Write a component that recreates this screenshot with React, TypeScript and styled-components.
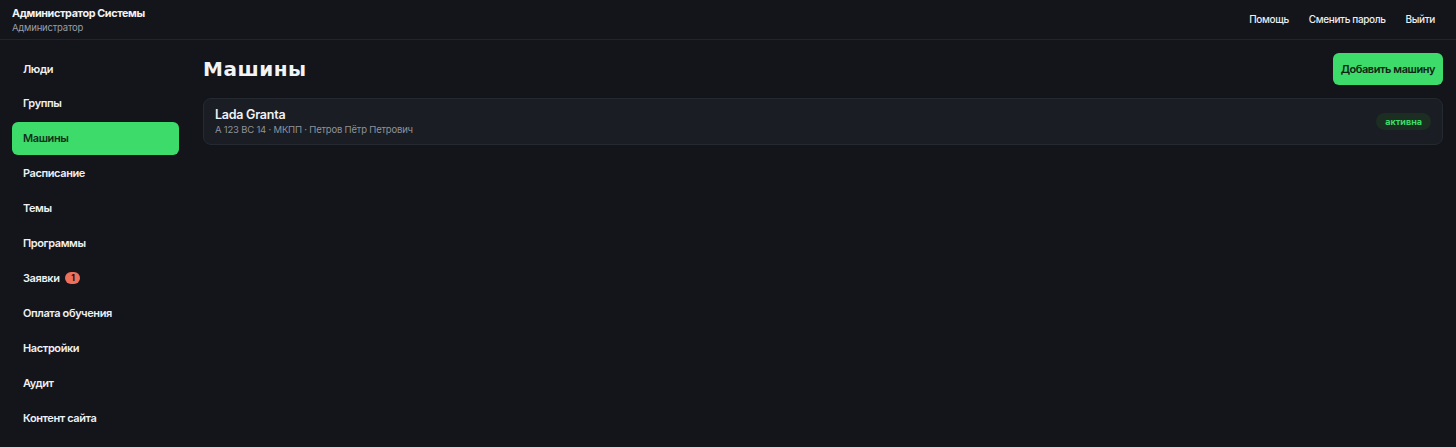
import React from "react";
import styled, { createGlobalStyle } from "styled-components";

const Global = createGlobalStyle`
  html, body { margin: 0; padding: 0; background: #13151b; }
  body { font-family: Inter, "Noto Sans", sans-serif; color: #e8eaee; }
  * { box-sizing: border-box; }
`;

const Page = styled.div`
  min-height: 447px;
  background: #13151b;
  display: flex;
  flex-direction: column;
`;

const Header = styled.header`
  height: 40px;
  border-bottom: 1px solid #22252c;
  display: flex;
  align-items: center;
  justify-content: space-between;
  padding: 0 21px 0 12px;
`;

const User = styled.div`
  display: flex;
  flex-direction: column;
  gap: 1px;
  margin-top: 1px;
`;

const UserName = styled.div`
  font-size: 10.8px;
  font-weight: 700;
  letter-spacing: -0.38px;
  color: #f1f2f4;
  line-height: 14px;
`;

const UserRole = styled.div`
  font-size: 9.5px;
  letter-spacing: -0.2px;
  color: #9a9ea6;
  line-height: 12px;
`;

const TopLinks = styled.nav`
  display: flex;
  gap: 20px;
  margin-top: -2px;
`;

const TopLink = styled.a`
  font-size: 10px;
  font-weight: 500;
  letter-spacing: -0.35px;
  color: #eceef1;
  text-decoration: none;
`;

const Body = styled.div`
  display: flex;
  flex: 1;
`;

const Sidebar = styled.aside`
  width: 191px;
  padding: 12px;
  display: flex;
  flex-direction: column;
  gap: 1.92px;
`;

const NavItem = styled.a<{ $active?: boolean }>`
  height: 33px;
  display: flex;
  align-items: center;
  gap: 6px;
  padding-left: 11px;
  border-radius: 6px;
  font-size: 11px;
  font-weight: 600;
  letter-spacing: -0.4px;
  color: ${(p) => (p.$active ? "#10301a" : "#eef0f3")};
  background: ${(p) => (p.$active ? "#3ddc6a" : "transparent")};
  text-decoration: none;
`;

const Count = styled.span`
  min-width: 15px;
  height: 12px;
  border-radius: 6px;
  background: #ee6f5c;
  color: #1d0c09;
  font-size: 8.5px;
  font-weight: 700;
  letter-spacing: 0;
  display: inline-flex;
  align-items: center;
  justify-content: center;
`;

const Main = styled.main`
  flex: 1;
  padding: 13px 13px 0 12px;
  display: flex;
  flex-direction: column;
  gap: 13px;
`;

const TitleRow = styled.div`
  display: flex;
  align-items: center;
  justify-content: space-between;
  height: 32px;
`;

const Title = styled.h1`
  margin: 0;
  font-family: "DejaVu Sans", sans-serif;
  font-size: 20px;
  font-weight: 700;
  letter-spacing: 0.5px;
  color: #f2f3f6;
`;

const PrimaryButton = styled.button`
  height: 32px;
  padding: 0 8px;
  border: none;
  border-radius: 6px;
  background: #3ddc6a;
  color: #0e2414;
  font-family: Inter, sans-serif;
  font-size: 11px;
  font-weight: 600;
  letter-spacing: -0.45px;
`;

const Card = styled.div`
  height: 47px;
  background: #1a1d23;
  border: 1px solid #252930;
  border-radius: 8px;
  display: flex;
  align-items: center;
  justify-content: space-between;
  padding: 0 11px;
`;

const CardText = styled.div`
  display: flex;
  flex-direction: column;
  gap: 2px;
  margin-top: -1px;
`;

const CardTitle = styled.div`
  font-size: 12.5px;
  font-weight: 600;
  letter-spacing: -0.25px;
  color: #f1f2f4;
  line-height: 15px;
`;

const CardSub = styled.div`
  font-size: 9.5px;
  letter-spacing: -0.2px;
  color: #8e939b;
  line-height: 12px;
`;

const Status = styled.span`
  height: 17px;
  padding: 0 9px;
  border-radius: 9px;
  background: #1c2e22;
  color: #3ddc6a;
  font-size: 9px;
  font-weight: 700;
  letter-spacing: 0;
  display: inline-flex;
  align-items: center;
`;

const nav = [
  "Люди",
  "Группы",
  "Машины",
  "Расписание",
  "Темы",
  "Программы",
  "Заявки",
  "Оплата обучения",
  "Настройки",
  "Аудит",
  "Контент сайта",
];

export default function App() {
  return (
    <Page>
      <Global />
      <Header>
        <User>
          <UserName>Администратор Системы</UserName>
          <UserRole>Администратор</UserRole>
        </User>
        <TopLinks>
          <TopLink href="#">Помощь</TopLink>
          <TopLink href="#">Сменить пароль</TopLink>
          <TopLink href="#">Выйти</TopLink>
        </TopLinks>
      </Header>
      <Body>
        <Sidebar>
          {nav.map((n) => (
            <NavItem key={n} href="#" $active={n === "Машины"}>
              {n}
              {n === "Заявки" && <Count>1</Count>}
            </NavItem>
          ))}
        </Sidebar>
        <Main>
          <TitleRow>
            <Title>Машины</Title>
            <PrimaryButton>Добавить машину</PrimaryButton>
          </TitleRow>
          <Card>
            <CardText>
              <CardTitle>Lada Granta</CardTitle>
              <CardSub>А 123 ВС 14 · МКПП · Петров Пётр Петрович</CardSub>
            </CardText>
            <Status>активна</Status>
          </Card>
        </Main>
      </Body>
    </Page>
  );
}
